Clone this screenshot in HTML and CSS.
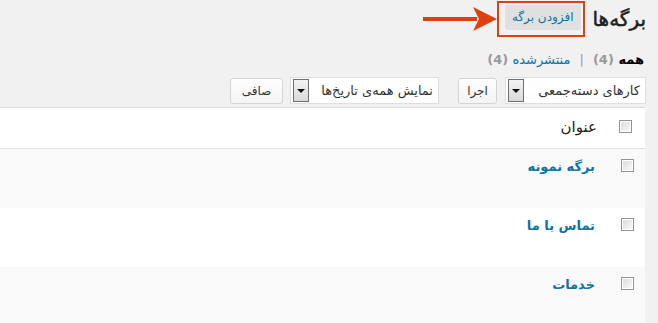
FILE: index.html
```html
<!DOCTYPE html>
<html lang="fa" dir="rtl">
<head>
<meta charset="utf-8">
<title>برگه‌ها</title>
<link rel="stylesheet" href="styles.css">
</head>
<body>
<div class="wrap">
  <div class="head">
    <h1 class="title">برگه‌ها</h1>
    <div class="callout"><a class="add-new" href="#">افزودن برگه</a></div>
    <svg class="arrow" width="74" height="26" viewBox="0 0 74 26" aria-hidden="true">
      <rect x="0" y="11" width="54" height="4" fill="#e0400e"/>
      <path d="M74 13 L50 1 L56 13 L50 25 Z" fill="#e0400e"/>
    </svg>
  </div>
  <ul class="subsubsub">
    <li><a class="current" href="#">همه <span class="count">(4)</span></a></li>
    <li class="sep">|</li>
    <li><a href="#">منتشرشده <span class="count">(4)</span></a></li>
  </ul>
  <div class="toolbar">
    <div class="select sel-bulk"><span class="sel-text">کارهای دسته‌جمعی</span><span class="sel-arrow"></span></div>
    <button class="btn btn-apply">اجرا</button>
    <div class="select sel-date"><span class="sel-text">نمایش همه‌ی تاریخ‌ها</span><span class="sel-arrow"></span></div>
    <button class="btn btn-filter">صافی</button>
  </div>
  <div class="list">
    <div class="row row-head">
      <div class="cb-cell"><span class="cb"></span></div>
      <div class="col-title">عنوان</div>
    </div>
    <div class="row alt">
      <div class="cb-cell"><span class="cb"></span></div>
      <div class="col-title"><a href="#">برگه نمونه</a></div>
    </div>
    <div class="row">
      <div class="cb-cell"><span class="cb"></span></div>
      <div class="col-title"><a href="#">تماس با ما</a></div>
    </div>
    <div class="row alt last">
      <div class="cb-cell"><span class="cb"></span></div>
      <div class="col-title"><a href="#">خدمات</a></div>
    </div>
  </div>
</div>
</body>
</html>
```
FILE: styles.css
```css
html, body {
  margin: 0;
  padding: 0;
  background: #f1f1f1;
  font-family: "DejaVu Sans", Tahoma, sans-serif;
  direction: rtl;
  color: #333;
}
.wrap {
  padding: 0 12px 0 0;
}
.head {
  display: flex;
  align-items: center;
  height: 36px;
  padding-top: 1px;
}
.title {
  margin: 0 0 0 8px;
  font-size: 20px;
  font-weight: normal;
  -webkit-text-stroke: 0.5px #222;
  line-height: 30px;
  color: #222;
}
.callout {
  border: 2px solid #e0400e;
  padding: 2px 2px 5px 6px;
  display: flex;
}
.add-new {
  display: block;
  background: #e0e0e0;
  color: #0e72a6;
  font-size: 12px;
  text-decoration: none;
  height: 25px;
  line-height: 24px;
  padding: 0 7px;
  border-radius: 2px;
}
.arrow {
  display: block;
  margin-left: 2px;
}
.subsubsub {
  list-style: none;
  margin: 13px 0 0 0;
  padding: 0 2px 0 0;
  display: flex;
  gap: 6px;
  font-size: 13px;
  line-height: 20px;
}
.subsubsub a {
  color: #0e72a6;
  text-decoration: none;
}
.subsubsub a.current {
  color: #000;
  font-weight: bold;
}
.subsubsub .count {
  color: #999;
  font-weight: bold;
}
.subsubsub .sep {
  color: #999;
  padding: 0 3px;
}
.toolbar {
  margin-top: 7px;
  display: flex;
  align-items: center;
  height: 27px;
}
.select {
  box-sizing: border-box;
  height: 27px;
  background: #fff;
  border: 1px solid #dfdfdf;
  display: flex;
  align-items: center;
  justify-content: space-between;
  padding: 0 5px 0 2px;
  font-size: 13px;
  color: #333;
}
.sel-bulk { width: 141px; }
.sel-date { width: 149px; margin-right: 19px; }
.sel-arrow {
  box-sizing: border-box;
  width: 16px;
  height: 23px;
  border: 1px solid #6f6f6f;
  background: linear-gradient(#f4f4f4, #d8d8d8);
  position: relative;
}
.sel-arrow::after {
  content: "";
  position: absolute;
  left: 3px;
  top: 9px;
  border-left: 4px solid transparent;
  border-right: 4px solid transparent;
  border-top: 4px solid #111;
}
.btn {
  box-sizing: border-box;
  height: 26px;
  border: 1px solid #d4d4d4;
  border-radius: 3px;
  background: linear-gradient(#fefefe, #f4f4f4);
  color: #333;
  font-family: "DejaVu Sans", Tahoma, sans-serif;
  font-size: 12px;
  padding: 0;
}
.btn-apply { width: 39px; margin-right: 8px; }
.btn-filter { width: 53px; margin-right: 7px; }
.list {
  margin-top: 3px;
  margin-right: 1px;
  border-top: 1px solid #dadada;
}
.row {
  display: flex;
  background: #fff;
  height: 59px;
  box-sizing: border-box;
}
.row.alt { background: #f9f9f9; }
.row.last { height: 60px; }
.row-head {
  height: 41px;
  border-bottom: 1px solid #e1e1e1;
}
.cb-cell {
  width: 48px;
  flex: none;
}
.cb {
  display: block;
  box-sizing: border-box;
  width: 13px;
  height: 13px;
  border: 1px solid #939393;
  background: linear-gradient(135deg, #d9d9d9, #fbfbfb);
  box-shadow: inset 0 0 0 1px #fff;
  margin: 10px 11px 0 0;
}
.row-head .cb {
  margin: 12px 13px 0 0;
}
.col-title {
  padding-top: 9px;
  line-height: 18px;
  font-size: 13px;
}
.row-head .col-title {
  font-size: 15px;
  padding-top: 10px;
  color: #222;
}
.col-title a {
  color: #0e72a6;
  font-weight: bold;
  text-decoration: none;
  margin-right: 2px;
}
```
